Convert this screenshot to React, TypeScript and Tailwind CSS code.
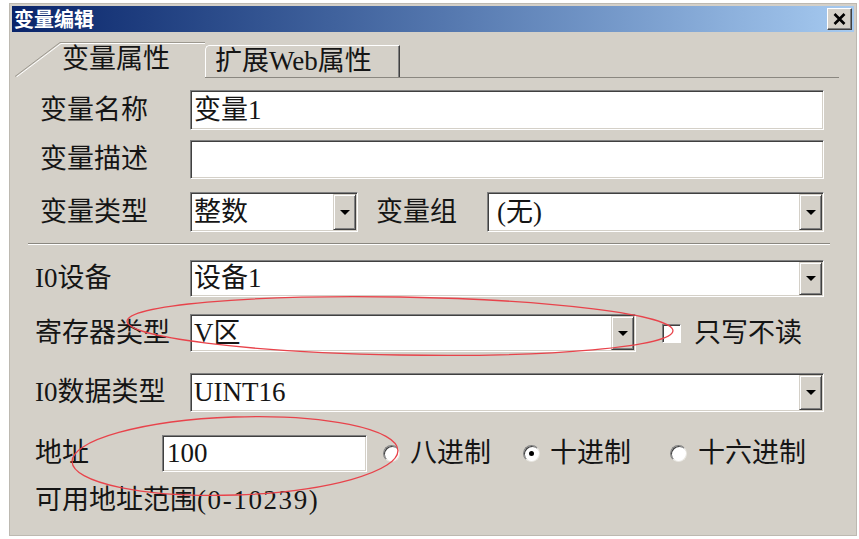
import React from "react";

const sunken =
  "bg-white border border-t-[#808080] border-l-[#808080] border-b-white border-r-white shadow-[inset_1px_1px_0_#404040,inset_-1px_-1px_0_#d4d0c8] flex items-center";

function DropArrow() {
  return (
    <div className="ml-auto my-[1px] mr-[1px] w-[23px] self-stretch bg-[#d4d0c8] border border-t-[#d4d0c8] border-l-[#d4d0c8] border-b-[#404040] border-r-[#404040] shadow-[inset_1px_1px_0_#ffffff,inset_-1px_-1px_0_#808080] flex items-center justify-center">
      <div className="w-0 h-0 border-x-[5px] border-x-transparent border-t-[5px] border-t-black" />
    </div>
  );
}

function Radio({ checked }: { checked?: boolean }) {
  return (
    <div className="w-[17px] h-[17px] shrink-0 rounded-full bg-white border border-t-[#808080] border-l-[#808080] border-b-[#e8e6e0] border-r-[#e8e6e0] shadow-[inset_1px_1px_0_#404040] flex items-center justify-center">
      {checked && <div className="w-[5px] h-[5px] rounded-full bg-black" />}
    </div>
  );
}

function CloseBtn() {
  return (
    <div className="w-[25px] h-[22px] bg-[#d4d0c8] border border-t-white border-l-white border-b-[#404040] border-r-[#404040] shadow-[inset_-1px_-1px_0_#808080] flex items-center justify-center">
      <svg width="13" height="12" viewBox="0 0 13 12">
        <path d="M1.5 1 L11.5 11 M11.5 1 L1.5 11" stroke="#000" strokeWidth="2.6" fill="none" />
      </svg>
    </div>
  );
}

export default function App() {
  return (
    <div className="relative w-[859px] h-[539px] bg-white overflow-hidden font-['Liberation_Serif','Noto_Sans_CJK_SC',serif] text-[27px] text-[#151515] leading-none">
      <div className="pt-[3px] pl-[9px]">
        <div className="w-[848px] h-[533px] bg-[#d4d0c8] border border-[#bdb9b1] p-[2px] flex flex-col">
          {/* caption bar */}
          <div className="h-[26px] flex items-center justify-between pl-[2px] pr-[2px] bg-linear-to-r from-[#0a246a] to-[#a6caf0]">
            <span className="font-['Noto_Sans_CJK_SC',sans-serif] font-bold text-[20px] text-white leading-none">
              变量编辑
            </span>
            <CloseBtn />
          </div>

          {/* tab strip */}
          <div className="mt-[10px] h-[35px] flex items-end pl-[3px]">
            <div className="relative h-[35px] w-[190px] pl-[47px] flex items-center">
              <svg className="absolute inset-0" width="190" height="35" viewBox="0 0 190 35">
                <polyline points="0,34.5 45,0.5 190,0.5" stroke="#9c988f" fill="none" />
                <polyline points="1.5,35 46,1.5 190,1.5" stroke="#ffffff" fill="none" />
              </svg>
              <span className="relative">变量属性</span>
            </div>
            <div className="h-[32px] w-[195px] pl-[9px] flex items-center border-t border-l border-t-white border-l-white border-r border-r-[#404040] rounded-tl-[5px] shadow-[inset_-1px_0_0_#808080]">
              扩展Web属性
            </div>
          </div>
          <div className="ml-[3px] w-[824px] h-px flex">
            <div className="w-[190px]" />
            <div className="flex-1 bg-[#8a8780]" />
          </div>

          {/* page */}
          <div className="ml-[3px] w-[824px] flex flex-col pt-[12px]">
            <div className="flex items-center h-[40px] pl-[25px]">
              <div className="w-[150px]">变量名称</div>
              <div className={`${sunken} w-[634px] h-full`}>
                <span className="pl-[3px]">变量1</span>
              </div>
            </div>

            <div className="mt-[10px] flex items-center h-[39px] pl-[25px]">
              <div className="w-[150px]">变量描述</div>
              <div className={`${sunken} w-[634px] h-full`} />
            </div>

            <div className="mt-[13px] flex items-center h-[40px] pl-[25px]">
              <div className="w-[150px]">变量类型</div>
              <div className={`${sunken} w-[168px] h-full`}>
                <span className="pl-[3px]">整数</span>
                <DropArrow />
              </div>
              <div className="ml-[18px] w-[111px]">变量组</div>
              <div className={`${sunken} w-[337px] h-full`}>
                <span className="pl-[9px]">(无)</span>
                <DropArrow />
              </div>
            </div>

            <div className="mt-[11px] ml-[13px] w-[802px] h-[2px] border-t border-t-[#8a8780] border-b border-b-white" />

            <div className="mt-[15px] flex items-center h-[37px] pl-[20px]">
              <div className="w-[155px]">I0设备</div>
              <div className={`${sunken} w-[634px] h-full`}>
                <span className="pl-[3px]">设备1</span>
                <DropArrow />
              </div>
            </div>

            <div className="mt-[17px] flex items-center h-[38px] pl-[20px]">
              <div className="w-[155px]">寄存器类型</div>
              <div className={`${sunken} w-[446px] h-full`}>
                <span className="pl-[3px]">V区</span>
                <DropArrow />
              </div>
              <div className="ml-[26px] w-[19px] h-[19px] bg-white border border-t-[#808080] border-l-[#808080] border-b-white border-r-white shadow-[inset_1px_1px_0_#404040]" />
              <div className="ml-[13px]">只写不读</div>
            </div>

            <div className="mt-[21px] flex items-center h-[39px] pl-[20px]">
              <div className="w-[155px]">I0数据类型</div>
              <div className={`${sunken} w-[634px] h-full`}>
                <span className="pl-[3px]">UINT16</span>
                <DropArrow />
              </div>
            </div>

            <div className="mt-[23px] flex items-center h-[37px] pl-[20px]">
              <div className="w-[127px]">地址</div>
              <div className={`${sunken} w-[205px] h-full`}>
                <span className="pl-[4px]">100</span>
              </div>
              <div className="ml-[16px] w-[140px] flex items-center gap-[10px]">
                <Radio />
                <span>八进制</span>
              </div>
              <div className="w-[147px] flex items-center gap-[10px]">
                <Radio checked />
                <span>十进制</span>
              </div>
              <div className="flex items-center gap-[11px]">
                <Radio />
                <span>十六进制</span>
              </div>
            </div>

            <div className="mt-[13px] h-[30px] flex items-center pl-[20px]">
              可用地址范围<span className="tracking-[1.6px]">(0-10239)</span>
            </div>
          </div>
        </div>
      </div>

      {/* hand-drawn red markings */}
      <svg className="absolute inset-0 pointer-events-none" width="859" height="539" viewBox="0 0 859 539">
        <ellipse cx="400" cy="326" rx="273" ry="29" transform="rotate(1 400 326)" fill="none" stroke="#e8434b" strokeWidth="1.3" />
        <ellipse cx="235" cy="456" rx="163" ry="39" transform="rotate(-2 235 456)" fill="none" stroke="#e8434b" strokeWidth="1.3" />
      </svg>
    </div>
  );
}
